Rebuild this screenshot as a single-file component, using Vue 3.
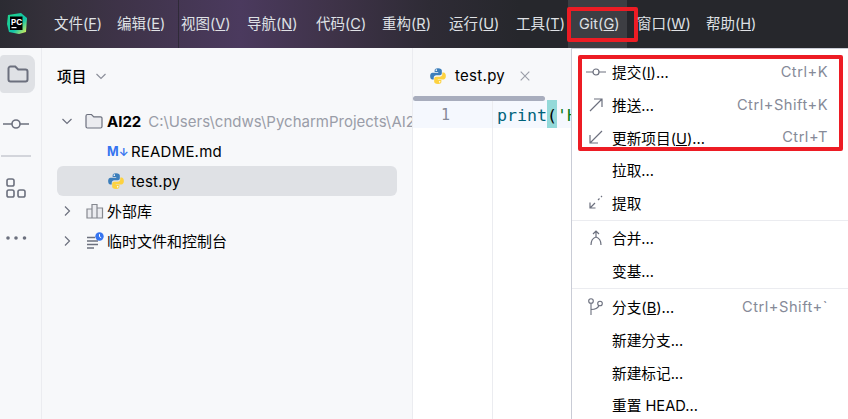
<script setup>
const topMenus = [
  { pre: '文件(', key: 'F', w: 63 }, { pre: '编辑(', key: 'E', w: 64 }, { pre: '视图(', key: 'V', w: 66 },
  { pre: '导航(', key: 'N', w: 69 }, { pre: '代码(', key: 'C', w: 66 }, { pre: '重构(', key: 'R', w: 67 },
  { pre: '运行(', key: 'U', w: 67 }, { pre: '工具(', key: 'T', w: 63 }, { pre: 'Git(', key: 'G', w: 58 },
  { pre: '窗口(', key: 'W', w: 69 }, { pre: '帮助(', key: 'H', w: 60 }
]
const gitMenu = [
  { icon: 'commit', pre: '提交(', key: 'I', post: ')...', sc: 'Ctrl+K' },
  { icon: 'push', pre: '推送...', sc: 'Ctrl+Shift+K' },
  { icon: 'update', pre: '更新项目(', key: 'U', post: ')...', sc: 'Ctrl+T' },
  { pre: '拉取...' },
  { icon: 'fetch', pre: '提取' },
  { sep: true },
  { icon: 'merge', pre: '合并...' },
  { pre: '变基...' },
  { sep: true, wide: true },
  { icon: 'branch', pre: '分支(', key: 'B', post: ')...', sc: 'Ctrl+Shift+`' },
  { pre: '新建分支...' },
  { pre: '新建标记...' },
  { pre: '重置 HEAD...' }
]
</script>

<template>
  <div class="app">
    <header class="titlebar">
      <div class="logo">
        <svg width="22" height="24" viewBox="0 0 22 24">
          <defs>
            <linearGradient id="pcg" x1="0" y1="0" x2="1" y2="1">
              <stop offset="0" stop-color="#21d789" />
              <stop offset="0.6" stop-color="#12c4a8" />
              <stop offset="1" stop-color="#fcf84a" />
            </linearGradient>
          </defs>
          <path d="M2 3 15 1l6 5-1 14-7 2-10-2-2-8z" fill="url(#pcg)" />
          <rect x="4" y="4.500" width="12.500" height="13.500" fill="#000" />
          <rect x="5.500" y="15" width="5" height="1.200" fill="#fff" />
        </svg>
        <span class="logo-text">PC</span>
      </div>
      <nav class="topmenu">
        <span v-for="m in topMenus" :key="m.key" class="topitem" :style="{ width: m.w + 'px' }">{{ m.pre }}<u>{{ m.key }}</u>)</span>
      </nav>
      <div class="git-hover"></div>
    </header>

    <main class="body">
      <aside class="sidebar">
        <div class="side-btn active">
          <svg width="24" height="24" viewBox="0 0 24 24" fill="none" stroke="#6c707e" stroke-width="2">
            <path d="M2.500 6.500a2 2 0 0 1 2-2h4.700l3 3h7.300a2 2 0 0 1 2 2v8a2 2 0 0 1-2 2h-15a2 2 0 0 1-2-2z" />
          </svg>
        </div>
        <div class="side-commit">
          <svg width="26" height="12" viewBox="0 0 26 12" fill="none" stroke="#6c707e" stroke-width="1.600">
            <circle cx="13" cy="6" r="4" /><path d="M0 6h9M17 6h9" />
          </svg>
        </div>
        <div class="side-sep"></div>
        <div class="side-plugins">
          <svg width="20" height="20" viewBox="0 0 20 20" fill="none" stroke="#6c707e" stroke-width="1.600">
            <rect x="1" y="1" width="7" height="7" rx="1.800" /><rect x="1" y="12" width="7" height="7" rx="1.800" /><rect x="12" y="12" width="7" height="7" rx="1.800" />
          </svg>
        </div>
        <div class="side-more">
          <svg width="22" height="6" viewBox="0 0 22 6" fill="#6c707e">
            <circle cx="3" cy="3" r="1.800" /><circle cx="11" cy="3" r="1.800" /><circle cx="19.500" cy="3" r="1.800" />
          </svg>
        </div>
      </aside>

      <section class="project">
        <div class="proj-head">
          <span class="proj-title">项目</span>
          <svg width="12" height="12" viewBox="0 0 12 12" fill="none" stroke="#8c8f9a" stroke-width="1.200"><path d="M1.500 4 6 8.500 10.500 4" /></svg>
        </div>
        <div class="tree">
          <div class="row">
            <svg class="chev" width="12" height="12" viewBox="0 0 12 12" fill="none" stroke="#6c707e" stroke-width="1.200"><path d="M1.500 4 6 8.500 10.500 4" /></svg>
            <svg class="ico" width="18" height="16" viewBox="0 0 18 16" fill="#ebecf0" stroke="#6c707e" stroke-width="1.200"><path d="M1 3a1.500 1.500 0 0 1 1.500-1.500h4l2.300 2.300h6.700A1.500 1.500 0 0 1 17 5.300v8.200a1.500 1.500 0 0 1-1.500 1.500h-13A1.500 1.500 0 0 1 1 13.500z" /></svg>
            <b class="name-bold">AI22</b>
            <span class="path">C:\Users\cndws\PycharmProjects\AI22</span>
          </div>
          <div class="row file">
            <span class="md">M<span class="md-arrow">↓</span></span>
            <span class="fname">README.md</span>
          </div>
          <div class="row file selected">
            <svg class="py" width="18" height="18" viewBox="0 0 16 16">
              <path d="M8 1C5.500 1 5 2 5 3v1.500h3.200V5H3.200C2 5 1 6 1 8s.9 3.200 2 3.200h1.200V9.600c0-1.200 1-2.200 2.200-2.200h3.200c1 0 1.800-.8 1.800-1.800V3c0-1-1-2-3.400-2z" fill="#3c7ebb" />
              <path d="M8 15c2.500 0 3-1 3-2v-1.500H7.800V11h5c1.200 0 2.200-1 2.200-3s-.9-3.200-2-3.200h-1.200v1.600c0 1.200-1 2.200-2.200 2.200H6.400c-1 0-1.800.8-1.800 1.800V13c0 1 1 2 3.400 2z" fill="#fdd240" />
              <circle cx="6.500" cy="2.800" r=".7" fill="#fff" /><circle cx="9.500" cy="13.200" r=".7" fill="#fff" />
            </svg>
            <span class="fname">test.py</span>
          </div>
          <div class="row">
            <svg class="chev" width="12" height="12" viewBox="0 0 12 12" fill="none" stroke="#6c707e" stroke-width="1.200"><path d="M4 1.500 8.500 6 4 10.500" /></svg>
            <svg class="ico tight" width="18" height="16" viewBox="0 0 18 16" fill="#ebecf0" stroke="#85888f" stroke-width="1.200"><path d="M1 6h5v9H1zM6 1.500h5V15H6zM11 5h5.500v10H11z" /></svg>
            <span class="cjk">外部库</span>
          </div>
          <div class="row">
            <svg class="chev" width="12" height="12" viewBox="0 0 12 12" fill="none" stroke="#6c707e" stroke-width="1.200"><path d="M4 1.500 8.500 6 4 10.500" /></svg>
            <svg class="ico tight" width="18" height="18" viewBox="0 0 18 18">
              <path d="M1 5.500h8M1 9h11M1 12.500h11M1 16h7" fill="none" stroke="#6c707e" stroke-width="1.300" />
              <circle cx="13.500" cy="4.500" r="4.200" fill="#3574f0" />
              <path d="M13.500 2.200v2.500l1.700 1" fill="none" stroke="#fff" stroke-width="1" />
            </svg>
            <span class="cjk">临时文件和控制台</span>
          </div>
        </div>
      </section>

      <section class="editor">
        <div class="tabs">
          <div class="tab">
            <svg width="18" height="18" viewBox="0 0 16 16">
              <path d="M8 1C5.500 1 5 2 5 3v1.500h3.200V5H3.200C2 5 1 6 1 8s.9 3.200 2 3.200h1.200V9.600c0-1.200 1-2.200 2.200-2.200h3.200c1 0 1.800-.8 1.800-1.800V3c0-1-1-2-3.400-2z" fill="#3c7ebb" />
              <path d="M8 15c2.500 0 3-1 3-2v-1.500H7.800V11h5c1.200 0 2.200-1 2.200-3s-.9-3.200-2-3.200h-1.200v1.600c0 1.200-1 2.200-2.200 2.200H6.400c-1 0-1.800.8-1.800 1.800V13c0 1 1 2 3.400 2z" fill="#fdd240" />
              <circle cx="6.500" cy="2.800" r=".7" fill="#fff" /><circle cx="9.500" cy="13.200" r=".7" fill="#fff" />
            </svg>
            <span class="tab-name">test.py</span>
            <svg class="tab-x" width="10" height="10" viewBox="0 0 10 10" stroke="#9a9da8" stroke-width="1.100"><path d="M.7.7l8.600 8.600M9.300.7.700 9.300" /></svg>
          </div>
          <div class="tab-bar"></div>
        </div>
        <div class="codeline">
          <span class="lineno">1</span>
          <span class="code"><span class="fn">print</span><span class="paren">(</span><span class="str">'H</span></span>
        </div>
        <div class="gutter-rest"></div>
      </section>
    </main>

    <div class="menu">
      <template v-for="(it, i) in gitMenu" :key="i">
        <div v-if="it.sep" class="msep" :class="{ wide: it.wide }"></div>
        <div v-else class="mitem">
          <span class="micon">
            <svg v-if="it.icon === 'commit'" width="20" height="10" viewBox="0 0 20 10" fill="none" stroke="#6c707e" stroke-width="1.200"><circle cx="10" cy="5" r="3" /><path d="M0 5h7M13 5h7" /></svg>
            <svg v-else-if="it.icon === 'push'" width="14" height="14" viewBox="0 0 14 14" fill="none" stroke="#6c707e" stroke-width="1.200"><path d="M1 13 13 1M5 1h8v8" /></svg>
            <svg v-else-if="it.icon === 'update'" width="14" height="14" viewBox="0 0 14 14" fill="none" stroke="#6c707e" stroke-width="1.200"><path d="M13 1 1 13M9 13H1V5" /></svg>
            <svg v-else-if="it.icon === 'fetch'" width="14" height="14" viewBox="0 0 14 14" fill="none" stroke="#6c707e" stroke-width="1.200"><path d="M6 8 1 13M1 7.500V13h5.500M9 5l1.500-1.500M12 2l1-1" /></svg>
            <svg v-else-if="it.icon === 'merge'" width="12" height="16" viewBox="0 0 12 16" fill="none" stroke="#6c707e" stroke-width="1.200"><path d="M6 1v6M3 4l3-3 3 3M6 7c-3 1-5 3-5 8M6 7c3 1 5 3 5 8" /></svg>
            <svg v-else-if="it.icon === 'branch'" width="15" height="17" viewBox="0 0 15 17" fill="none" stroke="#6c707e" stroke-width="1.100"><circle cx="3" cy="3" r="2.300" /><circle cx="12" cy="5.500" r="2.300" /><path d="M3 5.300V17M3 11.500c4.500 0 7-1.500 8-4" /></svg>
          </span>
          <span class="mlabel">{{ it.pre }}<u v-if="it.key">{{ it.key }}</u>{{ it.post }}</span>
          <span v-if="it.sc" class="mshort">{{ it.sc }}</span>
        </div>
      </template>
    </div>

    <div class="red red-git"></div>
    <div class="red red-items"></div>
  </div>
</template>

<style scoped>
.app {
  position: relative;
  width: 848px;
  height: 419px;
  overflow: hidden;
  display: flex;
  flex-direction: column;
  background: #fff;
  color: #000;
  font-family: Inter, "Noto Sans CJK SC", sans-serif;
  font-size: 15px;
}
.titlebar {
  height: 48px;
  flex: none;
  display: flex;
  align-items: center;
  background:
    linear-gradient(#2f2a38, #2f2a38) 178px 0 / 1px 100% no-repeat,
    linear-gradient(90deg, #2b2b32 0, #34303a 46px, #3e3348 120px, #4b3a5e 240px, #3f3349 330px, #2e2b35 430px, #26272c 520px);
}
.logo {
  position: relative;
  width: 54px;
  flex: none;
  padding-left: 6px;
  height: 24px;
  box-sizing: border-box;
}
.logo-text {
  position: absolute;
  left: 11px;
  top: 4px;
  font-size: 8px;
  font-weight: 700;
  line-height: 12px;
  color: #fff;
}
.topmenu {
  display: flex;
  position: relative;
  z-index: 1;
}
.topitem {
  flex: none;
  color: #dfe1e5;
  font-size: 14.500px;
  line-height: 20px;
  white-space: nowrap;
}
.git-hover {
  position: absolute;
  left: 568px;
  top: 0;
  width: 59px;
  height: 48px;
  background: #3d3e43;
}
.body {
  flex: 1;
  display: flex;
  min-height: 0;
}
.sidebar {
  width: 41px;
  flex: none;
  border-right: 1px solid #ebecf0;
  background: #f7f8fa;
  display: flex;
  flex-direction: column;
  padding-top: 7px;
  box-sizing: content-box;
}
.side-btn {
  width: 35px;
  height: 38px;
  border-radius: 4px 8px 8px 4px;
  display: flex;
  align-items: center;
  justify-content: center;
}
.side-btn.active {
  background: #dfe1e5;
}
.side-commit {
  margin: 25px 0 0 3px;
  height: 12px;
  display: flex;
}
.side-sep {
  margin: 25px 0 0 1px;
  width: 30px;
  height: 2px;
  background: #d3d5db;
}
.side-plugins {
  margin: 21px 0 0 6px;
  height: 20px;
  display: flex;
}
.side-more {
  margin: 37px 0 0 5px;
  height: 6px;
  display: flex;
}
.project {
  width: 370px;
  flex: none;
  border-right: 1px solid #ebecf0;
  background: #f7f8fa;
  overflow: hidden;
}
.proj-head {
  height: 55px;
  padding-left: 15px;
  display: flex;
  align-items: center;
  gap: 9px;
  box-sizing: border-box;
}
.proj-title {
  font-weight: 500;
  font-size: 14.670px;
}
.tree {
  padding-top: 3px;
}
.row {
  height: 30px;
  display: flex;
  align-items: center;
  white-space: nowrap;
  padding-left: 4px;
  margin: 0 15px;
  border-radius: 6px;
  color: #000;
}
.chev {
  flex: none;
}
.ico {
  flex: none;
  margin-left: 12px;
  margin-right: 4px;
}
.ico.tight {
  margin-left: 13px;
  margin-right: 3px;
}
.name-bold {
  font-weight: 700;
  margin-right: 7px;
}
.path {
  color: #9a9da8;
}
.cjk {
  padding-bottom: 2px;
}
.file {
  padding-left: 50px;
}
.fname {
  letter-spacing: .2px;
}
.md {
  color: #3574f0;
  font-weight: 700;
  font-size: 12.500px;
  width: 24px;
  flex: none;
}
.md-arrow {
  font-size: 11px;
}
.py {
  flex: none;
  margin-right: 6px;
}
.selected {
  background: #dfe1e5;
}
.editor {
  flex: 1;
  min-width: 0;
  display: flex;
  flex-direction: column;
  background: #fff;
}
.tabs {
  height: 52px;
  background: #f7f8fa;
  flex: none;
  position: relative;
}
.tab {
  display: flex;
  align-items: center;
  height: 48px;
  padding-left: 16px;
  padding-top: 7px;
  box-sizing: border-box;
}
.tab-name {
  margin-left: 8px;
  letter-spacing: .3px;
}
.tab-x {
  margin-left: 15px;
}
.tab-bar {
  position: absolute;
  left: 0;
  top: 48px;
  width: 132px;
  height: 5px;
  border-radius: 3px;
  background: #a8adbd;
}
.codeline {
  height: 28px;
  background: #f5f8fe;
  display: flex;
  align-items: flex-start;
  flex: none;
}
.lineno {
  width: 80px;
  flex: none;
  box-sizing: border-box;
  padding-left: 28px;
  height: 100%;
  line-height: 30px;
  color: #868a98;
  border-right: 1px solid #ebecf0;
  font-family: "DejaVu Sans Mono", monospace;
  font-size: 15px;
}
.code {
  margin-left: 4px;
  height: 28px;
  font-family: "DejaVu Sans Mono", monospace;
  font-size: 16.600px;
  line-height: 31px;
}
.fn {
  color: #00627a;
}
.paren {
  background: #93d9d9;
  display: inline-block;
  height: 28px;
}
.str {
  color: #067d17;
}
.gutter-rest {
  flex: 1;
  width: 80px;
  box-sizing: border-box;
  border-right: 1px solid #ebecf0;
}
.menu {
  position: absolute;
  left: 571px;
  top: 48px;
  width: 277px;
  height: 371px;
  box-sizing: border-box;
  background: #fff;
  border-left: 1px solid #c9ccd6;
  border-top: 1px solid #c9ccd6;
  padding-top: 6.700px;
  font-size: 14.670px;
}
.mitem {
  height: 32.600px;
  display: flex;
  align-items: center;
  white-space: nowrap;
  padding-right: 20px;
}
.micon {
  width: 40px;
  flex: none;
  display: flex;
  justify-content: center;
  padding-left: 7px;
  box-sizing: border-box;
}
.mlabel {
  flex: 1;
  color: #000;
}
.mshort {
  color: #868a98;
  letter-spacing: .5px;
}
.msep {
  height: 1px;
  margin: 1px 0;
  background: #ebecf0;
}
.msep.wide {
  margin-bottom: 1.800px;
}
.red {
  position: absolute;
  border: 4px solid #ed1c24;
  border-radius: 2px;
  box-sizing: border-box;
  pointer-events: none;
}
.red-git {
  left: 567px;
  top: 7px;
  width: 71px;
  height: 35px;
}
.red-items {
  left: 578px;
  top: 55px;
  width: 265px;
  height: 96px;
}
</style>
